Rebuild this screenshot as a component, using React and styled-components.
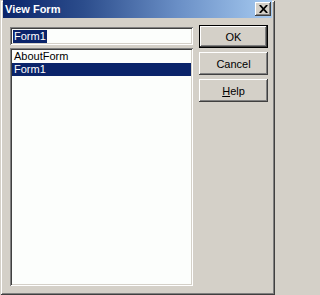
import React from "react";
import styled, { createGlobalStyle } from "styled-components";

const GlobalStyle = createGlobalStyle`
  html, body {
    margin: 0;
    padding: 0;
    background: #d4d0c8;
  }
  body {
    font-family: "Liberation Sans", Arial, sans-serif;
    font-size: 11px;
  }
`;

const Window = styled.div`
  width: 275px;
  height: 295px;
  box-sizing: border-box;
  padding: 0 4px 4px 4px;
  background: #d4d0c8;
  display: flex;
  flex-direction: column;
  box-shadow: inset 1px 1px #d4d0c8, inset -1px -1px #404040,
    inset 2px 2px #ffffff, inset -2px -2px #808080;
`;

const TitleBar = styled.div`
  height: 18px;
  margin: 0 -1px;
  display: flex;
  align-items: center;
  justify-content: space-between;
  padding: 0 1px 0 2px;
  background: linear-gradient(to right, #0a246a 0%, #2c4d8c 30%, #6a8fc6 65%, #a6caf0 100%);
`;

const Title = styled.span`
  color: #ffffff;
  font-weight: bold;
  font-size: 11px;
`;

const CloseButton = styled.div`
  width: 16px;
  height: 14px;
  box-sizing: border-box;
  background: #d4d0c8;
  display: flex;
  align-items: center;
  justify-content: center;
  box-shadow: inset -1px -1px #404040, inset 1px 1px #ffffff,
    inset -2px -2px #808080, inset 2px 2px #d4d0c8;
`;

const Body = styled.div`
  flex: 1;
  display: flex;
  gap: 6px;
  padding: 7px 3px 5px 6px;
  min-height: 0;
`;

const LeftColumn = styled.div`
  width: 183px;
  margin-top: 2px;
  display: flex;
  flex-direction: column;
  gap: 3px;
`;

const Sunken = styled.div`
  box-sizing: border-box;
  background: #fcfefc;
  padding: 2px;
  box-shadow: inset 1px 1px #808080, inset -1px -1px #ffffff,
    inset 2px 2px #404040, inset -2px -2px #d4d0c8;
`;

const TextBox = styled(Sunken)`
  height: 18px;
  display: flex;
  align-items: center;
  padding-left: 3px;
`;

const Selected = styled.span`
  background: #0a246a;
  color: #ffffff;
  line-height: 13px;
  padding: 0 1px;
`;

const ListBox = styled(Sunken)`
  flex: 1;
`;

const ListItem = styled.div`
  height: 13px;
  line-height: 13px;
  padding-left: 2px;
  background: ${(p) => (p.$selected ? "#0a246a" : "transparent")};
  color: ${(p) => (p.$selected ? "#ffffff" : "#000000")};
`;

const ButtonColumn = styled.div`
  width: 69px;
  display: flex;
  flex-direction: column;
  gap: 4px;
`;

const Button = styled.div`
  height: 23px;
  box-sizing: border-box;
  display: flex;
  align-items: center;
  justify-content: center;
  background: #d4d0c8;
  color: #000000;
  box-shadow: ${(p) =>
    p.$default
      ? "inset 0 0 0 1px #000000, inset -2px -2px #404040, inset 2px 2px #ffffff, inset -3px -3px #808080"
      : "inset -1px -1px #404040, inset 1px 1px #ffffff, inset -2px -2px #808080, inset 2px 2px #d4d0c8"};
`;

const Key = styled.span`
  text-decoration: underline;
`;

function CloseIcon() {
  return (
    <svg width="9" height="8" viewBox="0 0 9 8">
      <path d="M0.8 0 L8.2 8 M8.2 0 L0.8 8" stroke="#000" strokeWidth="1.8" />
    </svg>
  );
}

export default function App() {
  const forms = ["AboutForm", "Form1"];
  return (
    <>
      <GlobalStyle />
      <Window>
        <TitleBar>
          <Title>View Form</Title>
          <CloseButton>
            <CloseIcon />
          </CloseButton>
        </TitleBar>
        <Body>
          <LeftColumn>
            <TextBox>
              <Selected>Form1</Selected>
            </TextBox>
            <ListBox>
              {forms.map((f) => (
                <ListItem key={f} $selected={f === "Form1"}>
                  {f}
                </ListItem>
              ))}
            </ListBox>
          </LeftColumn>
          <ButtonColumn>
            <Button $default>OK</Button>
            <Button>Cancel</Button>
            <Button>
              <Key>H</Key>elp
            </Button>
          </ButtonColumn>
        </Body>
      </Window>
    </>
  );
}
